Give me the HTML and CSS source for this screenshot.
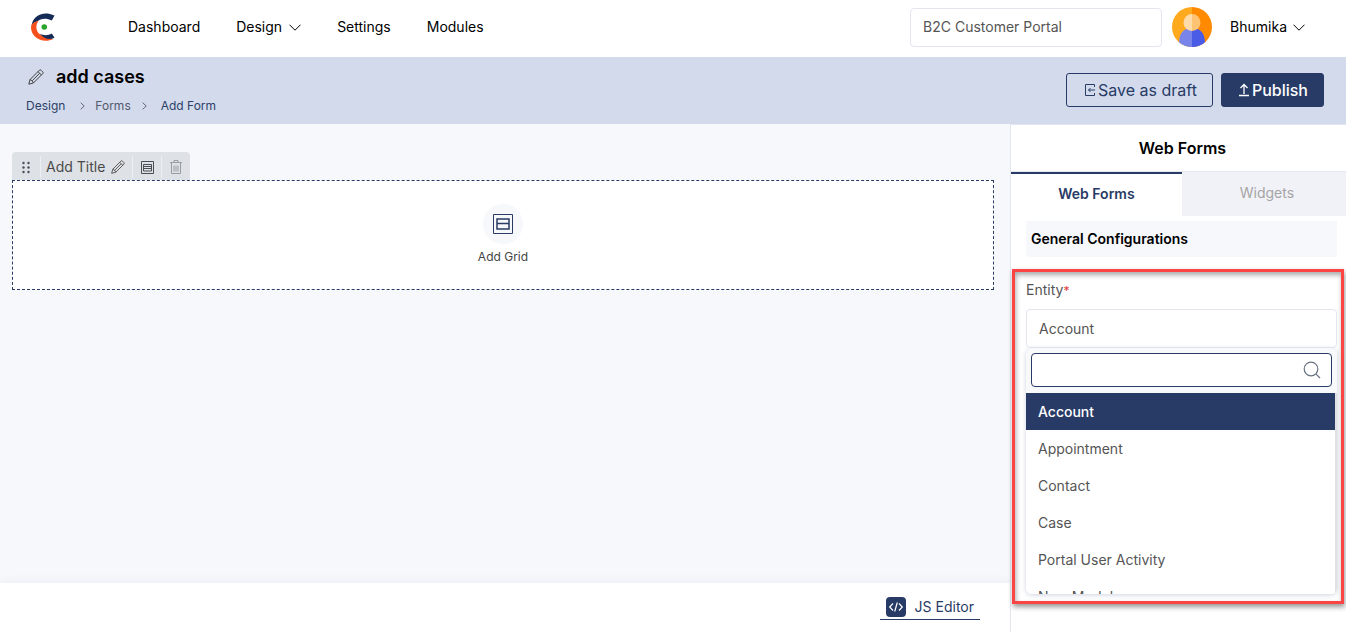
FILE: index.html
```html
<!DOCTYPE html>
<html lang="en">
<head>
<meta charset="utf-8">
<title>Add Form</title>
<link rel="stylesheet" href="styles.css">
</head>
<body>
<svg class="defs" aria-hidden="true">
  <symbol id="pencil" viewBox="0 0 16 16"><path d="M.8 15.200L2 10.600 11.300 1.300Q12.200.4 13.100 1.300L14.700 2.900Q15.600 3.800 14.700 4.700L5.400 14ZM10 2.600L13.400 6M2 10.600Q4.800 11.200 5.400 14M11.600 4.300L4.300 11.700" fill="none" stroke="currentColor" stroke-linejoin="round"/></symbol>
  <symbol id="down" viewBox="0 0 12 7"><path d="M.5.7L6 6.200 11.500.7" fill="none" stroke="currentColor"/></symbol>
  <symbol id="right" viewBox="0 0 5 8"><path d="M.7.700L4.200 4 .7 7.300" fill="none" stroke="currentColor"/></symbol>
</svg>
<header class="topbar">
  <a class="logo" href="#" aria-label="Home">
    <svg width="24" height="28" viewBox="0 0 24 28">
      <path d="M1.500 9C4 2 13-2.500 23.500 2.500L20.800 7.500C15 4.500 9.500 5.500 6 8.500Q3 9 .5 12Z" fill="#152a55"/>
      <path d="M0 14C0 11 3.500 8.500 7.500 8C4 13 5 18 9 21.500C13 24 17 26 22.500 26C12 31 0 25 0 14Z" fill="#f4511e"/>
      <path d="M8.500 20.500C13 23 17 22.500 20.800 20.500L23.500 24.800C18 27.500 12.500 25.500 8.500 20.500Z" fill="#152a55"/>
      <circle cx="13.300" cy="14" r="2.800" fill="#2ba52b"/>
    </svg>
  </a>
  <nav class="nav">
    <a href="#">Dashboard</a>
    <a href="#">Design <svg class="caret"><use href="#down"/></svg></a>
    <a href="#">Settings</a>
    <a href="#">Modules</a>
  </nav>
  <select class="field portal" aria-label="Portal"><option>B2C Customer Portal</option></select>
  <svg class="avatar" viewBox="0 0 40 40" aria-hidden="true">
    <clipPath id="round"><circle cx="20" cy="20" r="20"/></clipPath>
    <g clip-path="url(#round)">
      <path d="M0 0h20v40H0z" fill="#ffa91f"/><path d="M20 0h20v40H20z" fill="#ff8a00"/>
      <path d="M20 21C12 21 7 26 7 36v4h13z" fill="#7984eb"/><path d="M20 21c8 0 13 5 13 15v4H20z" fill="#4a5be5"/>
      <path d="M20 7a8.500 8.500 0 0 0 0 17z" fill="#ffdba9"/><path d="M20 7a8.500 8.500 0 0 1 0 17z" fill="#ffc473"/>
    </g>
  </svg>
  <button class="user">Bhumika <svg class="caret"><use href="#down"/></svg></button>
</header>
<div class="titlebar">
  <div class="heading">
    <h1><button class="plain" aria-label="Rename form"><svg class="pencil"><use href="#pencil"/></svg></button>add cases</h1>
    <nav class="crumbs" aria-label="Breadcrumb">
      <a href="#">Design</a><svg class="chev"><use href="#right"/></svg>
      <a class="muted" href="#">Forms</a><svg class="chev"><use href="#right"/></svg>
      <a href="#">Add Form</a>
    </nav>
  </div>
  <div class="actions">
    <button class="btn">
      <svg width="12" height="14" viewBox="0 0 12 14" fill="none" stroke="currentColor"><path d="M10.500 4V1.500h-9v11h9V10M11 7H4.500M6.500 5l-2 2 2 2"/></svg>Save as draft
    </button>
    <button class="btn primary">
      <svg width="12" height="14" viewBox="0 0 12 14" fill="none" stroke="currentColor" stroke-width="1.300"><path d="M6 11V1.500M2.500 5L6 1.500 9.500 5M1 12.500h10"/></svg>Publish
    </button>
  </div>
</div>
<div class="workspace">
  <main class="editor">
    <div class="canvas">
      <div class="toolbar">
        <button class="tool grip" aria-label="Move"><svg width="8" height="13" viewBox="0 0 8 13" fill="#474f5c"><circle cx="1.500" cy="2" r="1.200"/><circle cx="6.500" cy="2" r="1.200"/><circle cx="1.500" cy="6.500" r="1.200"/><circle cx="6.500" cy="6.500" r="1.200"/><circle cx="1.500" cy="11" r="1.200"/><circle cx="6.500" cy="11" r="1.200"/></svg></button>
        <button class="tool title">Add Title <svg class="pencil small"><use href="#pencil"/></svg></button>
        <button class="tool layout" aria-label="Layout"><svg width="13" height="13" viewBox="0 0 13 13" fill="none" stroke="#4b4f55"><path d="M.5.500h12v12H.5zM2.500 3.500h8v6.500h-8zM3 5.500h7M3 7.500h7"/></svg></button>
        <button class="tool trash" aria-label="Delete"><svg width="12" height="14" viewBox="0 0 12 14" fill="none" stroke="#9a9da1"><path d="M0 2.500h12M4 2.500v-2h4v2M1.500 3v10.500h9V3M4 5.500v6M6 5.500v6M8 5.500v6"/></svg></button>
      </div>
      <section class="dropzone">
        <button class="add">
          <span class="disc"><svg width="20" height="20" viewBox="0 0 20 20" fill="none" stroke="#2a3b64"><path d="M.5.500h19v19H.5z"/><path d="M4 5h12v10H4zM4 9.500h12" stroke-width="1.500"/></svg></span>
          Add Grid
        </button>
      </section>
    </div>
    <footer class="footer">
      <button class="js">
        <svg width="20" height="20" viewBox="0 0 20 20"><rect width="20" height="20" rx="4" fill="#283b66"/><path d="M7 6.500L3.700 10 7 13.500M13 6.500l3.300 3.500-3.300 3.500M11.300 5.500l-2.600 9" fill="none" stroke="#fff" stroke-width="1.200"/></svg>
        JS Editor
      </button>
    </footer>
  </main>
  <aside class="panel">
    <h2>Web Forms</h2>
    <div class="tabs" role="tablist">
      <button class="tab active" role="tab" aria-selected="true">Web Forms</button>
      <button class="tab" role="tab" aria-selected="false">Widgets</button>
    </div>
    <h3>General Configurations</h3>
    <div class="entity">
      <label for="entity">Entity<span class="required">*</span></label>
      <select class="field" id="entity"><option>Account</option></select>
      <div class="menu">
        <div class="search">
          <input type="text" aria-label="Search entities">
          <svg width="18" height="18" viewBox="0 0 18 18" fill="none" stroke="#687180" stroke-width="1.200"><circle cx="8" cy="8" r="6.800"/><path d="M12.800 12.800l4.200 4.200"/></svg>
        </div>
        <ul class="options" role="listbox" aria-label="Entities">
          <li class="selected" role="option" aria-selected="true">Account</li>
          <li role="option">Appointment</li>
          <li role="option">Contact</li>
          <li role="option">Case</li>
          <li role="option">Portal User Activity</li>
          <li role="option">New Module</li>
        </ul>
      </div>
      <div class="highlight"></div>
    </div>
  </aside>
</div>
</body>
</html>
```
FILE: styles.css
```css
* { box-sizing: border-box; }
body {
  margin: 0;
  min-height: 100vh;
  display: flex;
  flex-direction: column;
  font: 14px/20px Inter, "Liberation Sans", sans-serif;
  color: #000;
  background: #fff;
}
button, input, select { font: inherit; color: inherit; }
button { border: 0; padding: 0; background: none; cursor: pointer; }
a { color: inherit; text-decoration: none; }
h1, h2, h3, ul { margin: 0; padding: 0; }
svg { flex: none; }
.defs { position: absolute; width: 0; height: 0; }

.topbar { height: 57px; padding: 0 41px 3px 31px; display: flex; align-items: center; }
.logo { display: flex; margin-right: 73px; }
.nav { display: flex; gap: 36px; margin-right: auto; }
.nav a, .user { display: flex; align-items: center; gap: 7px; }
.user { gap: 6px; }
.caret { width: 12px; height: 7px; }
.field {
  appearance: none;
  height: 39px;
  padding: 0 12px;
  border: 1px solid #e5e5f1;
  border-radius: 4px;
  background: #fff;
  color: #555;
}
.portal { width: 252px; margin-right: 10px; }
.avatar { width: 40px; height: 40px; margin-right: 18px; }

.titlebar {
  height: 67px;
  padding: 0 22px 2px 26px;
  display: flex;
  align-items: center;
  justify-content: space-between;
  background: #d2daec;
}
h1 { display: flex; align-items: center; gap: 12px; padding-left: 2px; font-size: 18px; font-weight: 600; line-height: 24px; }
.plain { display: flex; color: #444; }
.pencil { width: 16px; height: 16px; }
.crumbs { display: flex; align-items: center; margin-top: 9px; font-size: 12px; line-height: 16px; color: #2d3f68; }
.crumbs .muted { color: #52596b; }
.chev { width: 5px; height: 8px; margin: 0 10px 0 15px; color: #667; }
.crumbs .muted + .chev { margin: 0 14px 0 11px; }
.actions { display: flex; gap: 8px; }
.btn {
  height: 34px;
  padding: 0 15px 0 17px;
  display: flex;
  align-items: center;
  gap: 2px;
  border: 1px solid #283b66;
  border-radius: 3px;
  font-size: 16px;
  color: #283b66;
}
.primary { padding-left: 16px; background: #283b66; color: #fff; font-weight: 500; }

.workspace { flex: 1; display: flex; }
.editor { flex: 1; display: flex; flex-direction: column; background: #f6f8fc; }
.canvas { flex: 1; padding: 28px 16px 0 12px; }
.toolbar { width: max-content; height: 28px; padding-top: 2px; display: flex; align-items: center; border-radius: 4px 4px 0 0; background: #dee2e6; color: #4a4a4a; }
.tool { height: 22px; display: flex; align-items: center; justify-content: center; gap: 6px; border-left: 1px solid #eceff4; }
.tool.grip { width: 28px; border: 0; }
.tool.title { padding: 0 7px 0 5px; }
.tool.layout { width: 29px; }
.tool.trash { width: 29px; }
.small { width: 14px; height: 14px; }
.dropzone { height: 110px; display: flex; align-items: center; justify-content: center; border: 1px dashed #283b66; background: #fff; }
.add { display: flex; flex-direction: column; align-items: center; gap: 3px; font-size: 12px; color: #444; }
.disc { width: 40px; height: 40px; display: grid; place-items: center; border-radius: 50%; background: #f6f8fc; }
.footer { height: 49px; padding: 0 30px 1px 0; display: flex; align-items: center; justify-content: flex-end; background: #fff; box-shadow: 0 0 10px #e9ebf2; }
.js { height: 26px; padding: 0 6px; display: flex; align-items: center; gap: 9px; border-bottom: 1px solid #283b66; color: #283b66; }

.panel { width: 336px; padding-bottom: 28px; border: solid #e3e6f0; border-width: 1px 0 0 1px; background: #fff; }
h2 { padding: 11px 0 11px 8px; border-bottom: 1px solid #e5e7ef; font-size: 16px; font-weight: 600; line-height: 24px; text-align: center; }
.tabs { display: flex; height: 44px; }
.tab { flex: 1; padding: 0 0 2px 6px; background: #f1f2f7; color: #a5a5a5; }
.tab.active { flex: 0 0 51%; padding: 0 0 3px; border-top: 2px solid #283b66; background: #fff; color: #283b66; font-weight: 600; }
h3 { margin: 5px 9px 0 15px; padding: 8px 5px; background: #f6f8fc; font-size: 14px; font-weight: 600; line-height: 20px; }
.entity { position: relative; margin: 12px 9px 0 15px; padding-top: 11px; color: #555; }
.entity label { display: block; margin-bottom: 8px; }
.entity .field { display: block; width: 100%; }
.required { font-size: 12px; color: #e23b3b; }
.menu { border-radius: 6px; overflow: hidden; background: #f8f9fb; box-shadow: 0 1px 5px #cfd3de; }
.search { position: relative; padding: 5px 5px 6px; }
.search input { display: block; width: 100%; height: 34px; padding: 0 36px 0 10px; border: 1px solid #283b66; border-radius: 4px; background: #fff; }
.search svg { position: absolute; right: 16px; top: 13px; }
.options { height: 201px; overflow-y: auto; scrollbar-width: none; list-style: none; background: #fff; border-right: 2px solid #e0e1e5; }
.options li { height: 37px; padding: 9px 12px 8px; }
.options .selected { background: #283b66; color: #fff; font-weight: 500; }
.highlight { position: absolute; inset: 0 -7px -10px -14px; border: 3px solid #fb4444; box-shadow: 1px 3px 5px #999, inset 1px 3px 5px #aaa; pointer-events: none; }
```
